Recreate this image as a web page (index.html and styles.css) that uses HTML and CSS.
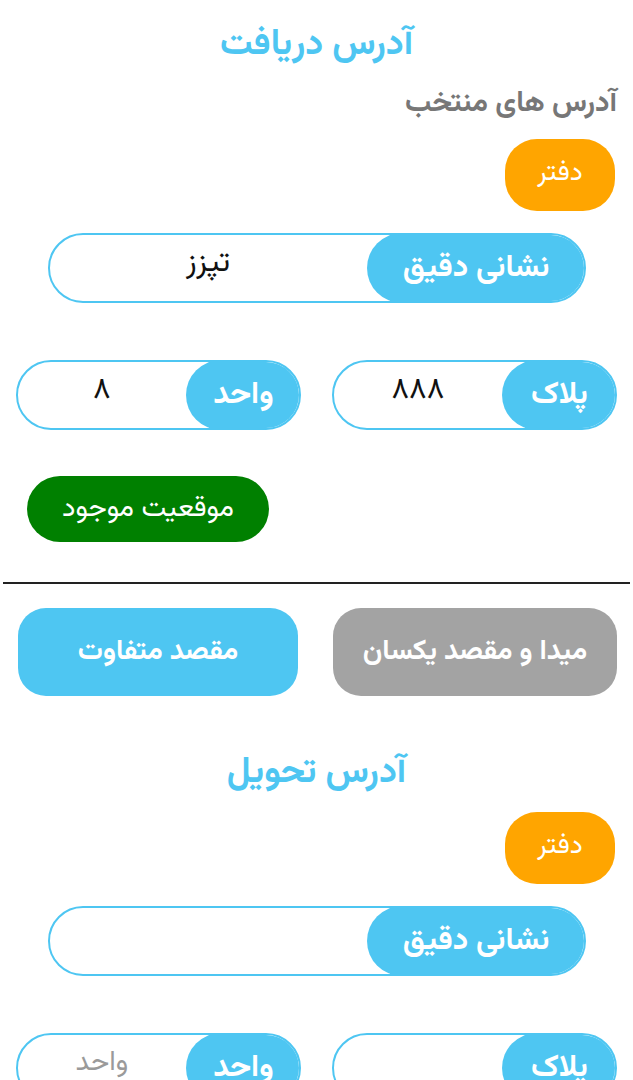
FILE: index.html
```html
<!DOCTYPE html>
<html lang="fa" dir="rtl">
<head>
<meta charset="utf-8">
<title>آدرس</title>
<link rel="stylesheet" href="styles.css">
</head>
<body>
<div class="page">
  <h2 class="title">آدرس دریافت</h2>
  <div class="subtitle">آدرس های منتخب</div>
  <div class="badges"><span class="badge">دفتر</span></div>

  <div class="field wide">
    <span class="field-label">نشانی دقیق</span>
    <span class="field-value">تپزز</span>
  </div>

  <div class="pair">
    <div class="field">
      <span class="field-label">پلاک</span>
      <span class="field-value digits">۸۸۸</span>
    </div>
    <div class="field">
      <span class="field-label">واحد</span>
      <span class="field-value digits">۸</span>
    </div>
  </div>

  <div class="locate-row"><span class="locate">موقعیت موجود</span></div>

  <div class="divider"></div>

  <div class="choices">
    <span class="choice gray">میدا و مقصد یکسان</span>
    <span class="choice blue">مقصد متفاوت</span>
  </div>

  <h2 class="title second">آدرس تحویل</h2>
  <div class="badges second"><span class="badge">دفتر</span></div>

  <div class="field wide">
    <span class="field-label">نشانی دقیق</span>
    <span class="field-value"></span>
  </div>

  <div class="pair">
    <div class="field">
      <span class="field-label">پلاک</span>
      <span class="field-value"></span>
    </div>
    <div class="field">
      <span class="field-label">واحد</span>
      <span class="field-value placeholder">واحد</span>
    </div>
  </div>
</div>
</body>
</html>
```
FILE: styles.css
```css
html, body {
  margin: 0;
  padding: 0;
  background: #ffffff;
}
body {
  direction: rtl;
  font-family: "Vazirmatn", "Noto Sans Arabic", "DejaVu Sans", sans-serif;
  overflow: hidden;
}
.page {
  display: flex;
  flex-direction: column;
  padding-top: 23px;
}
.title {
  margin: 0;
  text-align: center;
  color: #4ec6f2;
  font-size: 36px;
  font-weight: bold;
  line-height: 44px;
  height: 44px;
}
.title.second {
  margin-top: 55px;
}
.subtitle {
  margin-top: 20px;
  padding: 0 16px;
  color: #777777;
  font-size: 29px;
  font-weight: bold;
  line-height: 34px;
  height: 34px;
}
.badges {
  display: flex;
  padding: 0 18px;
  margin-top: 18px;
}
.badges.second {
  margin-top: 17px;
}
.badge {
  width: 110px;
  height: 72px;
  border-radius: 32px;
  background: #ffa500;
  color: #ffffff;
  font-size: 27px;
  display: flex;
  align-items: center;
  justify-content: center;
  padding-bottom: 4px;
  box-sizing: border-box;
}
.field {
  display: flex;
  height: 70px;
  box-sizing: border-box;
  border: 2px solid #4ec6f2;
  border-radius: 35px;
  overflow: hidden;
}
.field.wide {
  width: 538px;
  align-self: center;
  margin-top: 22px;
}
.field-label {
  flex: 0 0 41%;
  background: #4ec6f2;
  color: #ffffff;
  font-weight: bold;
  font-size: 31px;
  border-radius: 35px;
  display: flex;
  align-items: center;
  justify-content: center;
  margin: -2px -2px -2px 0;
}
.field-value {
  flex: 1;
  display: flex;
  align-items: center;
  justify-content: center;
  padding-bottom: 10px;
  font-size: 31px;
  color: #111111;
}
.field-value.digits {
  font-size: 30px;
}
.field-value.placeholder {
  color: #9a9a9a;
  font-size: 28px;
}
.pair {
  display: grid;
  grid-template-columns: 1fr 1fr;
  gap: 31px;
  padding: 0 16px;
  margin-top: 57px;
}
.locate-row {
  display: flex;
  justify-content: flex-end;
  padding: 0 27px;
  margin-top: 46px;
}
.locate {
  width: 242px;
  height: 66px;
  border-radius: 33px;
  background: #008000;
  color: #ffffff;
  font-size: 28px;
  display: flex;
  align-items: center;
  justify-content: center;
}
.divider {
  margin: 40px 3px 0;
  height: 2px;
  background: #222222;
}
.choices {
  display: grid;
  grid-template-columns: 284px 280px;
  justify-content: space-between;
  padding: 0 16px 0 18px;
  margin-top: 24px;
}
.choice {
  height: 88px;
  border-radius: 28px;
  color: #ffffff;
  font-weight: bold;
  font-size: 28px;
  display: flex;
  align-items: center;
  justify-content: center;
}
.choice.gray {
  background: #a3a3a3;
}
.choice.blue {
  background: #4ec6f2;
}
```
